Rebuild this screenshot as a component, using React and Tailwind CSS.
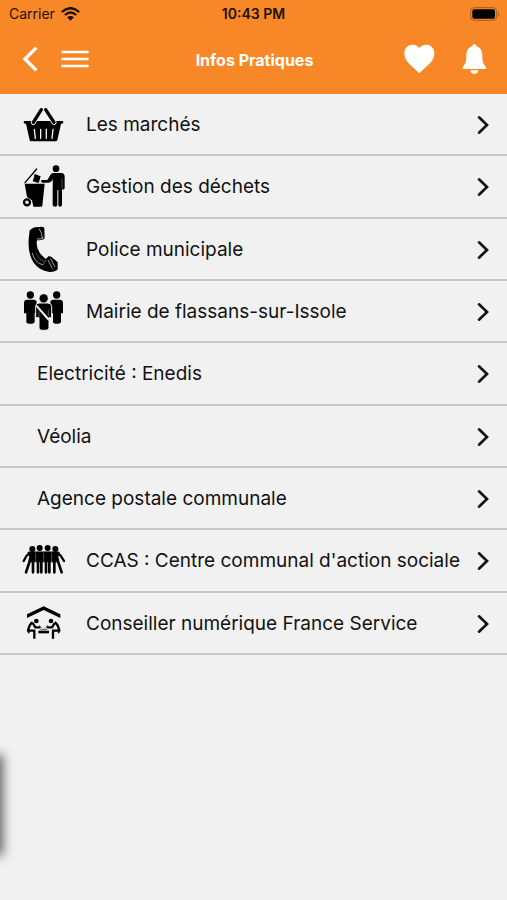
import * as React from "react";

const ROWS = [
  { label: "Les marchés", icon: Basket },
  { label: "Gestion des déchets", icon: Waste },
  { label: "Police municipale", icon: Phone },
  { label: "Mairie de flassans-sur-Issole", icon: Council },
  { label: "Electricité : Enedis" },
  { label: "Véolia" },
  { label: "Agence postale communale" },
  { label: "CCAS : Centre communal d'action sociale", icon: Group },
  { label: "Conseiller numérique France Service", icon: Advisor },
];

export default function App(){
  return (
    <div className="relative min-h-screen overflow-hidden bg-[#f1f1f1] font-['Inter','Liberation_Sans',sans-serif] text-[#111]">
      <header className="bg-[#f88827]">
        <StatusBar/>
        <NavBar/>
      </header>
      <main>
        <ul className="grid min-h-[561px] auto-rows-fr">
          {ROWS.map(r => <Row key={r.label} {...r}/>)}
        </ul>
      </main>
      {/* edge of the side drawer, parked off screen */}
      <div className="absolute top-[757px] -left-2 h-24 w-2 shadow-[0_0_12px_2px_rgba(0,0,0,0.7)]"/>
    </div>
  );
}

function StatusBar(){
  return (
    <div className="grid h-[27px] grid-cols-[1fr_auto_1fr] items-center px-[7px] text-[14px] text-[#1c0f04]">
      <div className="flex items-center gap-[6px] pl-[2px]">
        Carrier
        <svg viewBox="0 0 56 42" className="h-[14px] w-[19px]" fill="none" stroke="currentColor" strokeWidth="7">
          <path d="M2 15Q28-8 54 15M11 24Q28 9 45 24"/>
          <path d="M18 31Q28 23 38 31L28 41Z" fill="currentColor" stroke="none"/>
        </svg>
      </div>
      <div className="text-center font-semibold whitespace-nowrap">10:43 PM</div>
      <svg viewBox="0 0 90 42" className="h-[14px] w-[30px] justify-self-end">
        <rect x="2" y="2" width="78" height="38" rx="11" fill="none" stroke="#a65a18" strokeWidth="3"/>
        <rect x="7" y="7" width="68" height="28" rx="6" fill="#000"/>
        <path d="M84 14Q90 21 84 28Z" fill="#a65a18"/>
      </svg>
    </div>
  );
}

function NavBar(){
  return (
    <nav className="grid h-[67px] grid-cols-[1fr_auto_1fr] items-center pr-5 pb-1 pl-[22px] text-white">
      <div className="flex items-center gap-[22px]">
        <button type="button" aria-label="Retour">
          <svg viewBox="0 0 51 78" className="h-[26px] w-[17px]" fill="none" stroke="currentColor" strokeWidth="10">
            <path d="M43 5L9 39L43 73"/>
          </svg>
        </button>
        <button type="button" aria-label="Menu">
          <svg viewBox="0 0 84 54" className="h-[18px] w-7" fill="none" stroke="currentColor" strokeWidth="7" strokeLinecap="round">
            <path d="M4 6H80M4 27H80M4 48H80"/>
          </svg>
        </button>
      </div>
      <h1 className="pt-[2px] text-[16px] font-bold">Infos Pratiques</h1>
      <div className="flex items-center justify-end gap-[27px]">
        <button type="button" aria-label="Favoris">
          <svg viewBox="0 0 93 90" className="h-[30px] w-[31px]" fill="currentColor">
            <path d="M46 12C36-4 2-2 1 27C0 53 27 67 46 88C65 67 92 53 91 27C90-2 56-4 46 12Z"/>
          </svg>
        </button>
        <button type="button" aria-label="Notifications">
          <svg viewBox="0 0 75 93" className="mt-[2px] h-[31px] w-[25px]" fill="currentColor">
            <path d="M37 1C32 1 31 4 31 7C18 10 13 21 13 34C13 53 11 60 3 68C0 72 2 75 6 75H68C72 75 74 72 71 68C63 60 61 53 61 34C61 21 56 10 43 7C43 4 42 1 37 1Z"/>
            <path d="M25 79H49C48 94 26 94 25 79Z"/>
          </svg>
        </button>
      </div>
    </nav>
  );
}

function Row({label, icon: Icon}){
  return (
    <li className="flex border-b-2 border-[#c8c8c8]">
      <a href="#" className={`flex flex-1 items-center pr-[18px] ${Icon ? "pl-5" : "pl-[37px]"}`}>
        {Icon && <Icon/>}
        <span className={`flex-1 pt-[2px] text-[19px] whitespace-nowrap ${Icon ? "pl-[18px]" : ""}`}>{label}</span>
        <svg viewBox="0 0 36 60" className="mt-[2px] h-5 w-3" fill="none" stroke="currentColor" strokeWidth="8" strokeLinecap="round">
          <path d="M6 7L30 30L6 53"/>
        </svg>
      </a>
    </li>
  );
}

function Pic({box,children}){
  return <svg viewBox={box} className="size-12 shrink-0" fill="#000" aria-hidden="true">{children}</svg>;
}

function Basket(){
  return (
    <Pic box="60 16 144 144">
      <path d="M75 79H186Q190 79 190 83Q190 87 186 87H183L172 137Q171 140 167 140H94Q90 140 89 137L78 87H75Q71 87 71 83Q71 79 75 79Z"/>
      <g fill="none" strokeLinecap="round">
        <path d="M124 45L100 83M137 45L162 83" stroke="#f1f1f1" strokeWidth="15"/>
        <path d="M124 45L100 83M137 45L162 83" stroke="#000" strokeWidth="10"/>
        <path d="M103 104L106 131M122 104V131M139 104V131M159 104L156 131" stroke="#f1f1f1" strokeWidth="4"/>
      </g>
    </Pic>
  );
}

function Waste(){
  return (
    <Pic box="60 17 144 144">
      <path d="M74 82H134L127 148Q126 151 122 151H100L96 132L81 122Z"/>
      <circle cx="81" cy="138" r="9" fill="#f1f1f1" stroke="#000" strokeWidth="7"/>
      <path d="M75 79L110 38" stroke="#000" strokeWidth="4" strokeLinecap="round"/>
      <path d="M105 54L122 60L116 80L98 75Z"/>
      <path d="M103 56L114 59" stroke="#000" strokeWidth="5"/>
      <circle cx="168" cy="37" r="10"/>
      <path d="M160 50H184Q194 51 194 61V96Q193 100 189 100Q186 100 186 96V146Q185 151 180 151Q175 151 175 146V101H172V146Q171 151 166 151Q158 151 158 146V71Q152 79 145 79H127Q123 78 123 75Q123 71 127 71H142L151 56Q154 50 160 50Z"/>
      <path d="M157 68V96M186 66V96" stroke="#f1f1f1" strokeWidth="1"/>
    </Pic>
  );
}

function Phone(){
  return (
    <Pic box="60 18 144 144">
      <path d="M89 34Q99 23 118 24Q129 22 133 27L134 58Q130 64 111 64Q107 83 119 101Q127 112 138 120L145 112Q150 111 155 114L173 130V151Q165 160 148 159Q117 155 100 130Q81 98 87 51Z"/>
      <g fill="none" stroke="#f1f1f1" strokeWidth="2">
        <path d="M117 29Q127 42 127 58M111 60Q124 61 131 56M97 102Q103 130 129 138M144 123L157 149M151 118L165 144"/>
        <path d="M107 101Q114 120 133 128M129 139L137 123" strokeWidth="1"/>
      </g>
    </Pic>
  );
}

function Council(){
  return (
    <Pic box="60 19 144 144">
      <circle cx="91" cy="43" r="11"/>
      <circle cx="170" cy="43" r="11"/>
      <path d="M82 57H101Q110 57 110 65V96H104V123Q103 129 91 129Q79 129 79 123V98H72V67Q72 57 82 57ZM160 57H179Q189 57 189 67V98H183V123Q182 129 171 129Q159 129 159 123V98H151V65Q151 57 160 57Z"/>
      <path d="M118 67H143Q155 67 155 77V111H147V142Q146 149 131 149Q117 149 117 142V111H107V77Q107 67 118 67Z" stroke="#f1f1f1" strokeWidth="3"/>
      <circle cx="131" cy="53" r="13" stroke="#f1f1f1" strokeWidth="1"/>
      <path d="M109 75L147 118" stroke="#f1f1f1" strokeWidth="6"/>
      <path d="M117 91V111M145 86V106" stroke="#f1f1f1" strokeWidth="1"/>
    </Pic>
  );
}

function Group(){
  return (
    <Pic box="60 20 144 144">
      <circle cx="97" cy="59" r="9"/>
      <circle cx="119" cy="56" r="9"/>
      <circle cx="143" cy="56" r="9"/>
      <circle cx="166" cy="59" r="9"/>
      <g fill="none" stroke="#000" strokeLinecap="round" strokeLinejoin="round">
        <path d="M89 72L80 79L71 95M173 72L182 79L192 95" strokeWidth="7"/>
        <path d="M87 71H175" strokeWidth="9"/>
        <path d="M94 73L88 99L78 129M99 75V129M114 71V129M124 71V129M138 71V129M148 71V129M163 75V129M168 73L175 99L185 129" strokeWidth="8"/>
        <path d="M91 77H172M93 87H170M93 94H169" strokeWidth="10"/>
      </g>
      <path d="M107 70L107 98M131 70V98M155 70V98" stroke="#f1f1f1" strokeWidth="1"/>
    </Pic>
  );
}

function Advisor(){
  return (
    <Pic box="60 21 144 144">
      <path d="M81 67L131 43L181 67V78L131 54L81 78Z"/>
      <circle cx="109" cy="87" r="7"/>
      <circle cx="153" cy="87" r="7"/>
      <g fill="none" stroke="#000" strokeWidth="7" strokeLinejoin="round">
        <path d="M98 91Q88 96 84 116H103V140M98 93L106 106H121M164 91Q174 96 178 116H159V140M164 93L156 106H141"/>
        <path d="M86 113V124M176 113V124" strokeWidth="5"/>
        <path d="M115 120H147" strokeWidth="8"/>
        <path d="M118 100L125 108M143 100L136 108M121 112H141" stroke="#555" strokeWidth="3"/>
      </g>
    </Pic>
  );
}
